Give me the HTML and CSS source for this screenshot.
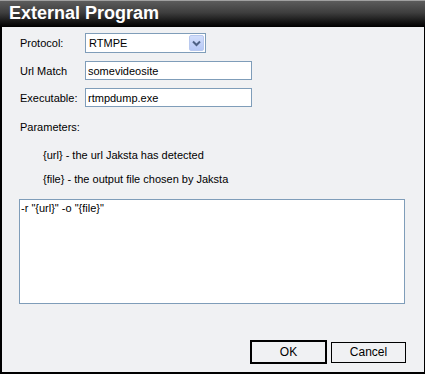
FILE: index.html
```html
<!DOCTYPE html>
<html>
    <head>
        <meta charset="utf-8">
        <link rel="stylesheet" href="styles.css">
    </head>
    <body>
        <div class="window">
            <div class="titlebar">External Program</div>
            <div class="content">
                <div class="fields">
                    <label for="protocol">Protocol:</label>
                    <div class="select" id="protocol">
                        <span class="value">RTMPE</span>
                        <span class="arrow">
                            <svg width="9" height="7" viewBox="0 0 9 7"><path d="M1 1.5 L4.5 5 L8 1.5" fill="none" stroke="#4d6185" stroke-width="2"/></svg>
                        </span>
                    </div>
                    <label for="urlmatch">Url Match</label>
                    <input type="text" id="urlmatch" value="somevideosite">
                    <label for="exe">Executable:</label>
                    <input type="text" id="exe" value="rtmpdump.exe">
                </div>
                <p class="params">Parameters:</p>
                <p class="hint first">{url} - the url Jaksta has detected</p>
                <p class="hint">{file} - the output file chosen by Jaksta</p>
                <textarea class="args">-r "{url}" -o "{file}"</textarea>
                <div class="buttons">
                    <button class="default">OK</button>
                    <button>Cancel</button>
                </div>
            </div>
        </div>
    </body>
</html>
```

FILE: styles.css
```css
body{
    margin: 0;
    font-family: 'Liberation Sans', Arial, sans-serif;
    font-size: 11px;
    color: #000;
}
body *{
    box-sizing: border-box;
}
.window{
    width: 425px;
    height: 374px;
    border: 1px solid #000;
    border-left-width: 2px;
    border-bottom-width: 2px;
    border-top: none;
    background: #f0f1f3;
    display: flex;
    flex-direction: column;
}
.titlebar{
    height: 27px;
    margin-left: -2px;
    margin-right: -1px;
    padding-left: 9px;
    border-top: 1px solid #a0a0a0;
    background: linear-gradient(#5c5c5c 0%, #3e3e3e 45%, #151515 80%, #000 100%);
    color: #fff;
    font-size: 18px;
    font-weight: bold;
    line-height: 25px;
}
.content{
    flex: 1;
    display: flex;
    flex-direction: column;
    padding: 6px 18px 8px 17px;
}
.fields{
    display: grid;
    grid-template-columns: 66px 167px;
    row-gap: 8px;
    align-items: center;
}
.fields label{
    padding-left: 1px;
}
.select{
    width: 121px;
    height: 20px;
    border: 1px solid #7f9db9;
    background: #fff;
    display: flex;
    align-items: stretch;
}
.select .value{
    flex: 1;
    padding-left: 3px;
    line-height: 18px;
}
.select .arrow{
    width: 15px;
    margin: 1px;
    border: 1px solid #b9c9ef;
    border-radius: 2px;
    background: linear-gradient(#d2defb, #b6c8f6);
    display: flex;
    align-items: center;
    justify-content: center;
}
input{
    width: 167px;
    height: 19px;
    border: 1px solid #7f9db9;
    padding: 0 2px;
    font: inherit;
}
.params{
    margin: 13px 0 0 1px;
    line-height: 14px;
}
.hint{
    margin: 10px 0 0 24px;
    line-height: 14px;
}
.hint.first{
    margin-top: 14px;
}
.args{
    margin-top: 13px;
    width: 386px;
    height: 105px;
    border: 1px solid #7f9db9;
    padding: 2px 1px;
    font: inherit;
    resize: none;
}
.buttons{
    margin-top: auto;
    display: flex;
    justify-content: flex-end;
    gap: 4px;
    align-items: center;
}
button{
    width: 75px;
    height: 21px;
    border: 1px solid #000;
    background: #f0f1f3;
    font: inherit;
    font-size: 12px;
    padding: 0;
}
button.default{
    width: 77px;
    height: 24px;
    border-width: 2px;
}
```
